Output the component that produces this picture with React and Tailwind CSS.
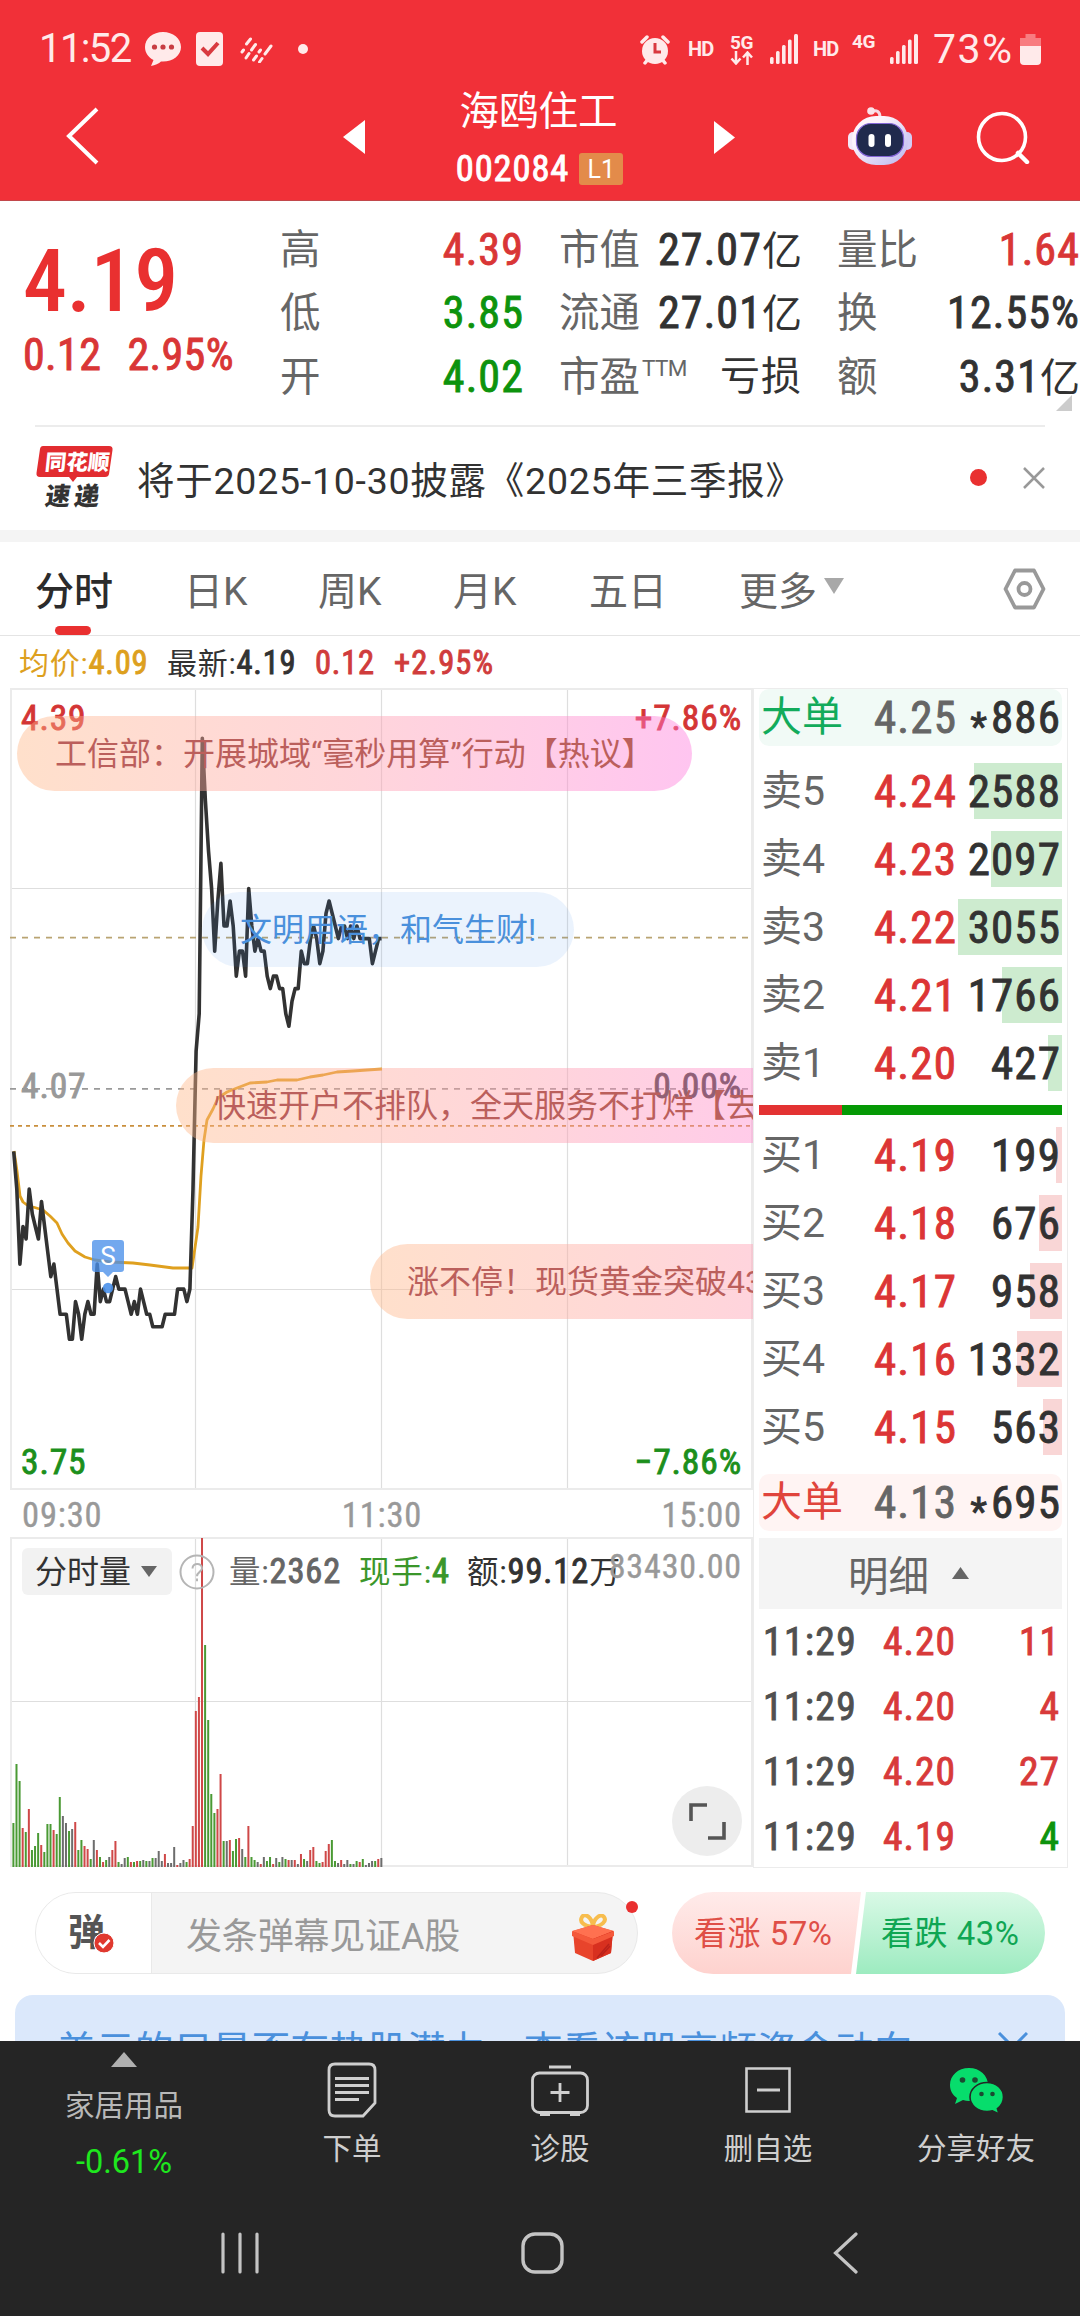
import React from 'react';
import { clsx } from 'clsx';

// Цена по минутам, в центах (09:30 → 11:29)
const PRICES = [
  402, 399, 393, 396, 395, 399, 397, 396, 395, 398, 396, 394, 392, 393, 391, 389, 389, 389, 387, 387,
  390, 389, 387, 389, 390, 389, 389, 393, 390, 391, 390, 390, 391, 392, 391, 391, 391, 390, 389, 390,
  389, 391, 390, 389, 389, 388, 388, 388, 388, 389, 389, 389, 389, 391, 391, 391, 390, 391, 399, 410,
  413, 435, 430, 426, 423, 418, 422, 425, 420, 420, 422, 420, 416, 418, 418, 416, 423, 420, 418, 419,
  418, 418, 416, 415, 416, 416, 415, 415, 413, 412, 414, 415, 415, 418, 417, 417, 419, 420, 419, 417,
  418, 421, 422, 421, 420, 419, 420, 420, 419, 420, 419, 420, 419, 419, 419, 419, 417, 418, 419, 419,
];

const AVG_LINE =
  '14,1151 17,1171 20,1196 23,1202 27,1205 33,1207 43,1210 50,1216 57,1223 62,1234 68,1243 75,1251 85,1257 95,1260 110,1262 133,1263 150,1265 173,1268 192,1268 198,1227 201,1176 204,1140 207,1120 213,1109 218,1098 227,1092 237,1088 250,1083 267,1082 277,1080 297,1080 310,1077 323,1075 337,1072 353,1071 367,1070 382,1069';

// Объём: цвет + высота столбика (r рост, g падение, k без изменений)
const VOLUMES =
  'g44 g103 g86 r39 g35 r58 g17 g21 g34 r22 g15 g43 g43 r37 g33 g70 k51 k44 g36 k38 r45 g17 g27 r21 r18 g8 k27 r17 g10 r5 g7 k10 r17 r26 g5 k3 k9 g10 r5 g5 r6 g6 k7 g6 k6 g9 k9 k16 k6 r13 k4 k4 k20 r2 k4 k7 g5 r8 r41 r156 r170 r329 g222 g147 g73 g54 r58 r93 g26 k26 r27 g16 g28 r29 k18 g10 r41 g10 g7 k5 r3 k10 g6 g10 r3 k9 g5 k10 g8 r7 k7 r7 k3 r13 g8 k6 r17 r20 g6 g4 r5 r16 r23 g27 g6 k4 r7 k3 k7 g3 k3 g6 r5 g8 k2 k4 k6 g6 r8 k9'.split(' ');
const VOL_COLORS = { r: '#cf4848', g: '#4a9a34', k: '#6d6d6d' };

const SELLS = [
  ['卖5', '4.24', '2588', 88],
  ['卖4', '4.23', '2097', 71],
  ['卖3', '4.22', '3055', 104],
  ['卖2', '4.21', '1766', 60],
  ['卖1', '4.20', '427', 14],
];
const BUYS = [
  ['买1', '4.19', '199', 6],
  ['买2', '4.18', '676', 23],
  ['买3', '4.17', '958', 32],
  ['买4', '4.16', '1332', 45],
  ['买5', '4.15', '563', 19],
];
const TRADES = [
  ['11:29', '4.20', '11', true],
  ['11:29', '4.20', '4', true],
  ['11:29', '4.20', '27', true],
  ['11:29', '4.19', '4', false],
];

const NUM = "font-['Roboto_Condensed','Noto_Sans_CJK_SC',sans-serif] tracking-[0.025em]";
// Чуть плотнее обычного начертания, но легче medium
const STRONG = '[-webkit-text-stroke:0.9px_currentColor]';
const THIN = 'font-normal [-webkit-text-stroke:0]';

const minuteX = (i) => 13.7 + i * 3.092;
const priceY = (p) => 1088.8 - (p - 407) * 12.52;

function SignalBars() {
  return (
    <svg className="h-[30px] w-[28px]" viewBox="0 0 28 30" fill="#ffeaea">
      <rect x="0" y="23" width="3.6" height="7" rx="1.5" />
      <rect x="6" y="17" width="3.6" height="13" rx="1.5" />
      <rect x="12" y="11" width="3.6" height="19" rx="1.5" />
      <rect x="18" y="5.500" width="3.6" height="24.500" rx="1.5" />
      <rect x="24" y="0" width="4" height="30" rx="1.5" />
    </svg>
  );
}

function StatusBar() {
  return (
    <div className="flex h-[98px] items-center pl-[39px] text-[#ffeaea]">
      <span className="w-[106px] text-[40px] leading-none tracking-[-0.04em]">11:52</span>
      <svg className="h-[36px] w-[36px]" viewBox="0 0 36 36">
        <path d="M18 1C8 1 0 7.500 0 16c0 6 3.500 10.500 8.500 13L6 35c4-.5 8-2.500 10-4.500h2c10 0 18-6 18-14.500S28 1 18 1z" fill="#ffeaea" />
        <circle cx="9.500" cy="16" r="2.600" fill="#c83c42" />
        <circle cx="18" cy="16" r="2.600" fill="#c83c42" />
        <circle cx="26.500" cy="16" r="2.600" fill="#c83c42" />
      </svg>
      <svg className="ml-[15px] h-[34px] w-[27px]" viewBox="0 0 27 34">
        <rect width="27" height="34" rx="4" fill="#ffeaea" />
        <path d="M6 16l6 6 10-11" fill="none" stroke="#d93a40" strokeWidth="4" />
      </svg>
      <svg className="ml-[17px] h-[28px] w-[33px]" viewBox="0 0 33 28" stroke="#ffeaea" strokeWidth="3" strokeLinecap="round" fill="none">
        <path d="M2 17l1.500-2M6.500 9l4-5M6 23l3-4.500M11.500 15l4-5.500M13.500 25l3-4M19 17l1.500-2M19.500 27l2.500-3.500M25 19l6-8" />
      </svg>
      <span className="ml-[25px] h-[10px] w-[10px] rounded-full bg-[#ffeaea]" />

      <svg className="ml-[332px] h-[31px] w-[30px]" viewBox="0 0 30 31">
        <path d="M2 8l5-5M28 8l-5-5M5 29l4-5M25 29l-4-5" stroke="#ffeaea" strokeWidth="3.500" strokeLinecap="round" />
        <circle cx="15" cy="17" r="13" fill="#ffeaea" />
        <path d="M15 9v9h6" fill="none" stroke="#d93a40" strokeWidth="3" />
      </svg>
      <span className="ml-[18px] w-[42px] text-[20px] leading-none font-bold tracking-[-0.04em]">HD</span>
      <div className="flex w-[40px] flex-col">
        <span className="text-[19px] leading-[17px] font-bold tracking-[-0.02em]">5G</span>
        <svg className="h-[14px] w-[24px]" viewBox="0 0 24 14" fill="none" stroke="#ffeaea" strokeWidth="2.500">
          <path d="M6 0v12M1.500 7.500L6 12.500l4.500-5M17.500 14V2M13 6.500l4.500-5 4.500 5" />
        </svg>
      </div>
      <SignalBars />
      <span className="ml-[15px] w-[39px] text-[20px] leading-none font-bold tracking-[-0.04em]">HD</span>
      <span className="mb-[15px] w-[38px] text-[19px] leading-none font-bold tracking-[-0.02em]">4G</span>
      <SignalBars />
      <span className="ml-[15px] w-[87px] text-[41px] leading-none tracking-[0.035em]">73%</span>
      <svg className="h-[31px] w-[21px]" viewBox="0 0 21 31">
        <path d="M5.500 0h10v4H21v9H0V4h5.500z" fill="#f87c80" />
        <path d="M0 12h21v15a4 4 0 0 1-4 4H4a4 4 0 0 1-4-4z" fill="#ffeaea" />
      </svg>
    </div>
  );
}

function Robot() {
  return (
    <svg className="mt-[-3px] h-[60px] w-[64px]" viewBox="0 0 64 60">
      <defs>
        <linearGradient id="shell" x1="0" y1="0" x2="1" y2="1">
          <stop offset="0.3" stopColor="#fdf4fb" />
          <stop offset="1" stopColor="#b9b4ee" />
        </linearGradient>
      </defs>
      <path d="M23 5.500c6-2 9 0 9 6" fill="none" stroke="#f7d9e4" strokeWidth="3" />
      <circle cx="23" cy="5" r="3.800" fill="#fbe3ea" />
      <rect x="0" y="26" width="10" height="18" rx="5" fill="#f4e8f8" />
      <rect x="54" y="26" width="10" height="18" rx="5" fill="#d3cdf4" />
      <rect x="4" y="10" width="56" height="49" rx="24" fill="url(#shell)" />
      <rect x="8.500" y="17.500" width="47" height="33" rx="14.500" fill="#202a4d" stroke="#8567d8" strokeWidth="1.200" />
      <rect x="20.500" y="28" width="6" height="13" rx="3" fill="#fff" />
      <rect x="37" y="28" width="6" height="13" rx="3" fill="#fff" />
    </svg>
  );
}

function Header() {
  return (
    <header className="h-[201px] border-b border-[#c2474b] bg-[#f13038] text-white">
      <StatusBar />
      <div className="flex h-[102px] pl-[66px]">
        <svg className="mt-[9px] h-[58px] w-[34px]" viewBox="0 0 34 58" fill="none" stroke="#fff" strokeWidth="4">
          <path d="M31 2L3 29l28 27" />
        </svg>
        <svg className="mt-[22px] ml-[243px] h-[34px] w-[22px]" viewBox="0 0 22 34" fill="#fff"><path d="M22 0v34L0 17z" /></svg>
        <div className="flex w-[349px] flex-col items-center">
          <span className="mt-[-6px] mr-[2px] text-[39.500px] leading-[40px]">海鸥住工</span>
          <div className="mt-[21px] flex items-center gap-[10px]">
            <span className={clsx(NUM, STRONG, 'text-[36.500px] leading-[32px]')}>002084</span>
            <span className="flex h-[32px] w-[44px] items-center justify-center rounded-[3px] bg-[#e38b4a] text-[25px] leading-none">L1</span>
          </div>
        </div>
        <svg className="mt-[23px] h-[33px] w-[21px]" viewBox="0 0 21 33" fill="#fff"><path d="M0 0v33l21-16.500z" /></svg>
        <div className="mt-[11px] ml-[113px]"><Robot /></div>
        <svg className="mt-[12px] ml-[64px] h-[54px] w-[54px]" viewBox="0 0 54 54" fill="none" stroke="#fff" strokeWidth="3.600">
          <circle cx="26" cy="27" r="23.500" />
          <path d="M42 43l9 9" strokeWidth="4.500" strokeLinecap="round" />
        </svg>
      </div>
    </header>
  );
}

function Stat({ label, sup, value, color = 'text-[#323232]', thin }) {
  return (
    <div className="flex h-[63.500px] items-center justify-between leading-none whitespace-nowrap">
      <span className="flex text-[40.500px] text-[#666]">
        {label}
        {sup && <sup className="top-0 ml-[2px] text-[22.500px] leading-[22px] tracking-[-0.03em]">{sup}</sup>}
      </span>
      <span className={clsx(NUM, color, thin ? 'text-[40px]' : clsx(STRONG, 'text-[44px]'))}>
        {value.replace('亿', '')}
        {value.includes('亿') && <span className={clsx(THIN, 'text-[40px] tracking-normal')}>亿</span>}
      </span>
    </div>
  );
}

function Quote() {
  return (
    <section className="relative flex h-[224px] pt-[17px]">
      <div className={clsx(NUM, 'w-[280px] shrink-0 pl-[23px]')}>
        <div className="pt-[19px] text-[88px] leading-[88px] font-medium tracking-[-0.005em] text-[#e93030]">4.19</div>
        <div className={clsx(STRONG, 'mt-[1px] flex gap-[26px] text-[44px] leading-[58px] text-[#d93636]')}>
          <span>0.12</span>
          <span>2.95%</span>
        </div>
      </div>
      <div className="w-[244px] shrink-0">
        <Stat label="高" value="4.39" color="text-[#d93636]" />
        <Stat label="低" value="3.85" color="text-[#0d930d]" />
        <Stat label="开" value="4.02" color="text-[#0d930d]" />
      </div>
      <div className="ml-[35px] w-[243px] shrink-0">
        <Stat label="市值" value="27.07亿" />
        <Stat label="流通" value="27.01亿" />
        <Stat label="市盈" sup="TTM" value="亏损" thin />
      </div>
      <div className="ml-[35px] w-[243px] shrink-0">
        <Stat label="量比" value="1.64" color="text-[#d93636]" />
        <Stat label="换" value="12.55%" />
        <Stat label="额" value="3.31亿" />
      </div>
      <svg className="absolute right-[8px] bottom-[14px] h-[16px] w-[16px]" viewBox="0 0 16 16"><path d="M16 0v16H0z" fill="#ccc" /></svg>
    </section>
  );
}

function News() {
  return (
    <section className="mx-[35px] flex h-[105px] items-center border-t-2 border-[#ececec]">
      <svg className="mt-[-2px] h-[70px] w-[80px] overflow-visible" viewBox="0 0 80 70" fontFamily="Noto Sans CJK SC" fontWeight="900">
        <path d="M8 3h66q4 0 3.500 4l-3.500 24q-.5 3-4 3H42l-4 5-4-5H5q-4 0-3.500-4L5 6q.5-3 3-3z" fill="#e22c30" />
        <text x="12" y="27" fontSize="21.500" fill="#fff" transform="skewX(-6)">同花顺</text>
        <text x="18" y="62" fontSize="25" letterSpacing="4" fill="#333" transform="skewX(-8)">速递</text>
      </svg>
      <span className="ml-[22px] pt-[6px] text-[37.500px] leading-none tracking-[0.02em] text-[#323232]">将于2025-10-30披露《2025年三季报》</span>
      <span className="mr-[36px] mb-[2px] ml-auto h-[17px] w-[17px] rounded-full bg-[#e93030]" />
      <svg className="mb-[2px] h-[22px] w-[22px]" viewBox="0 0 22 22" stroke="#999" strokeWidth="2.500"><path d="M1 1l20 20M21 1L1 21" /></svg>
    </section>
  );
}

function Tabs() {
  return (
    <nav className="flex h-[94px] items-center border-b border-[#e4e4e4] pl-[35px] text-[39px] leading-none text-[#666]">
      <div className="relative w-[149px] pt-[8px] font-medium text-[#2b2b2b]">
        分时
        <span className="absolute -bottom-[23px] left-[20px] h-[9px] w-[36px] rounded-full bg-[#e93030]" />
      </div>
      <span className="w-[134px] pt-[8px]">日K</span>
      <span className="w-[135px] pt-[8px]">周K</span>
      <span className="w-[136px] pt-[8px]">月K</span>
      <span className="w-[150px] pt-[8px]">五日</span>
      <span className="pt-[8px]">更多</span>
      <svg className="mb-[6px] ml-[7px] h-[16px] w-[20px]" viewBox="0 0 20 16"><path d="M0 0h20L10 16z" fill="#a8a8a8" /></svg>
      <svg className="ml-[159px] h-[42px] w-[43px]" viewBox="0 0 43 42" fill="none" stroke="#999" strokeWidth="3.800">
        <path d="M12 2.500h19L40.500 21 31 39.500H12L2.500 21z" strokeLinejoin="round" />
        <circle cx="21.500" cy="21" r="6" />
      </svg>
    </nav>
  );
}

function InfoLine() {
  return (
    <div className={clsx(NUM, STRONG, 'flex h-[52px] items-center pt-[3px] pl-[19px] text-[32.500px] leading-none')}>
      <span className="w-[148px] text-[#dda01e]"><span className={clsx(THIN, 'text-[30px]')}>均价:</span>4.09</span>
      <span className="w-[148px] text-[#323232]"><span className={clsx(THIN, 'text-[30px]')}>最新:</span>4.19</span>
      <span className="w-[79px] text-[#d03c3c]">0.12</span>
      <span className="tracking-[0.035em] text-[#d03c3c]">+2.95%</span>
    </div>
  );
}

function Bullet({ className, children }) {
  return (
    <div className={clsx('absolute flex h-[75px] items-center rounded-full text-[32px] leading-none whitespace-nowrap', className)}>
      {children}
    </div>
  );
}

const WARM = 'bg-linear-to-r from-[#ffb786]/43 via-[#ff9eaa]/43 to-[#ff78dc]/43 text-[#bb5f5c]';

function PriceChart() {
  const line = PRICES.map((p, i) => `${minuteX(i).toFixed(1)},${priceY(p).toFixed(1)}`).join(' ');
  const label = clsx(NUM, STRONG, 'absolute text-[35.500px] leading-none');

  return (
    <div className="relative h-[802px] overflow-hidden">
      <svg className="block h-[802px] w-[743px]" viewBox="10 688 743 802" fill="none">
        <path d="M195.500 688v802M381.500 688v802M567.500 688v802M10 888.500h743M10 1289.500h743" stroke="#dedede" strokeWidth="1.200" />
        <rect x="11" y="689" width="741" height="800" stroke="#ebebeb" strokeWidth="2" />
        <path d="M10 937.600h740" stroke="#b9a472" strokeWidth="1.800" strokeDasharray="6 6" />
        <path d="M10 1088.800h740" stroke="#999" strokeWidth="1.800" strokeDasharray="6 6" />
        <path d="M10 1125.800h740" stroke="#c98f3c" strokeWidth="1.800" strokeDasharray="4 4" />
        <polyline points={AVG_LINE} stroke="#dfa01f" strokeWidth="2.800" strokeLinejoin="round" />
        <polyline points={line} stroke="#323232" strokeWidth="3.600" strokeLinejoin="round" />
        <path d="M95 1240h26q3 0 3 3v26q0 3-3 3h-8l-5 5-5-5h-8q-3 0-3-3v-26q0-3 3-3z" fill="#4a90e9" fillOpacity="0.78" />
        <text x="108" y="1265" fontSize="26" fill="#fff" textAnchor="middle" fontFamily="Roboto">S</text>
        <circle cx="108" cy="1288" r="5.200" fill="#4a90e9" fillOpacity="0.9" />
      </svg>
      <span className={clsx(label, 'top-[13px] left-[11px] text-[#d43535]')}>4.39</span>
      <span className={clsx(label, 'top-[13px] right-[11px] text-[#d43535]')}>+7.86%</span>
      <span className={clsx(label, 'top-[381px] left-[11px] text-[#999]')}>4.07</span>
      <span className={clsx(label, 'top-[381px] right-[11px] text-[#3c3c3c]')}>0.00%</span>
      <span className={clsx(label, 'top-[757px] left-[11px] text-[#1c8f1c]')}>3.75</span>
      <span className={clsx(label, 'top-[757px] right-[11px] text-[#1c8f1c]')}>−7.86%</span>

      <Bullet className={clsx(WARM, 'top-[28px] left-[7px] w-[675px] pl-[38px]')}>工信部：开展城域“毫秒用算”行动【热议】</Bullet>
      <Bullet className="top-[204px] left-[192px] w-[372px] bg-[#3785eb]/10 pl-[38px] text-[#4a90dc]">文明用语，和气生财!</Bullet>
      <Bullet className={clsx(WARM, 'top-[380px] left-[166px] w-[700px] pl-[38px]')}>快速开户不排队，全天服务不打烊【去</Bullet>
      <Bullet className={clsx(WARM, 'top-[556px] left-[360px] w-[690px] pl-[37px]')}>涨不停！现货黄金突破43</Bullet>
    </div>
  );
}

function VolumeChart() {
  return (
    <div className="relative h-[330px]">
      <svg className="block h-[330px] w-[743px]" viewBox="10 1537 743 330" fill="none">
        <path d="M195.500 1537v330M381.500 1537v330M567.500 1537v330M10 1701.500h743" stroke="#dedede" strokeWidth="1.200" />
        <rect x="11" y="1538" width="741" height="328" stroke="#ebebeb" strokeWidth="2" />
        {VOLUMES.map((v, i) => {
          const h = Number(v.slice(1));
          return <rect key={i} x={12.4 + i * 3.092} y={1867 - h} width="2" height={h} fill={VOL_COLORS[v[0]]} />;
        })}
      </svg>
      <div className={clsx(NUM, 'absolute top-[11px] left-[12px] flex h-[47px] items-center text-[34.500px] leading-none whitespace-nowrap')}>
        <div className="flex h-[47px] w-[150px] items-center rounded-[6px] bg-[#f2f2f2] pl-[13px] text-[32px] tracking-normal text-[#323232]">
          分时量
          <svg className="ml-[10px] h-[11px] w-[16px]" viewBox="0 0 16 11"><path d="M0 0h16L8 11z" fill="#666" /></svg>
        </div>
        <svg className="ml-[7px] h-[36px] w-[36px]" viewBox="0 0 36 36" fill="none" stroke="#b5b5b5" strokeWidth="2">
          <circle cx="18" cy="18" r="16.500" />
          <path d="M13.500 14.500c0-6 9.500-6 9.500-.3 0 3.600-5 3.800-5 8M18 24.500v2.800" />
        </svg>
        <span className={clsx(STRONG, 'ml-[14px] w-[130px] text-[#666]')}><span className={clsx(THIN, 'text-[31.500px]')}>量:</span>2362</span>
        <span className={clsx(STRONG, 'w-[108px] text-[#3a962a]')}><span className={clsx(THIN, 'text-[31.500px]')}>现手:</span>4</span>
        <span className={clsx(STRONG, 'text-[#323232]')}><span className={clsx(THIN, 'text-[31.500px]')}>额:</span>99.12<span className={clsx(THIN, 'text-[31px]')}>万</span></span>
      </div>
      <span className={clsx(NUM, 'absolute top-[12px] right-[11px] text-[34px] leading-none text-[#999] [-webkit-text-stroke:0.4px_currentColor]')}>83430.00</span>
      <div className="absolute top-[249px] right-[11px] flex h-[70px] w-[70px] items-center justify-center rounded-full bg-[#ededed]">
        <svg className="h-[37px] w-[37px]" viewBox="0 0 37 37" fill="none" stroke="#555" strokeWidth="3.600">
          <path d="M2 18V2h16M35 19v16H19" />
        </svg>
      </div>
    </div>
  );
}

function BigOrder({ price, volume, className, labelColor }) {
  return (
    <div className={clsx(NUM, STRONG, 'grid h-[57px] grid-cols-[113px_88px_1fr] items-center pr-px pl-[2px] text-[45px] leading-none', className)}>
      <span className={clsx(THIN, 'text-[41px] tracking-normal', labelColor)}>大单</span>
      <span className="text-[#666]">{price}</span>
      <span className="text-right text-[#323232]"><span className="relative top-[7px] mr-[3px] text-[38px]">*</span>{volume}</span>
    </div>
  );
}

function Level({ row, fill }) {
  const [label, price, volume, width] = row;
  return (
    <div className={clsx(NUM, STRONG, 'relative grid h-[68px] grid-cols-[113px_88px_1fr] items-center pr-px pl-[2px] text-[45px] leading-none')}>
      <span className={clsx('absolute top-[6px] right-0 h-[56px]', fill)} style={{ width }} />
      <span className={clsx(THIN, "font-['Roboto','Noto_Sans_CJK_SC',sans-serif] text-[41px] tracking-normal text-[#666]")}>{label}</span>
      <span className="text-[#dc3535]">{price}</span>
      <span className="relative text-right text-[#323232]">{volume}</span>
    </div>
  );
}

function OrderBook() {
  return (
    <aside className="h-[1180px] w-[315px] overflow-hidden border border-[#ececec] px-[5px]">
      <BigOrder price="4.25" volume="886" className="rounded-[10px] bg-[#f1faf6]" labelColor="text-[#12ab5b]" />
      <div className="mt-[11px]">{SELLS.map((r) => <Level key={r[0]} row={r} fill="bg-[#cdebcf]" />)}</div>
      <div className="mt-[8px] flex h-[10px]">
        <div className="w-[83px] bg-[#e33232]" />
        <div className="flex-1 bg-[#059905]" />
      </div>
      <div className="mt-[6px]">{BUYS.map((r) => <Level key={r[0]} row={r} fill="bg-[#f9d6d6]" />)}</div>
      <BigOrder price="4.13" volume="695" className="mt-[13px] rounded-[10px] bg-[#fff4f3]" labelColor="text-[#e0443c]" />
      <div className="mt-[7px] flex h-[71px] items-center justify-center gap-[23px] bg-[#f4f4f4] pt-[8px] pr-[4px] text-[40.500px] leading-none text-[#666]">
        明细
        <svg className="mb-[10px] h-[12px] w-[17px]" viewBox="0 0 17 12"><path d="M8.500 0L17 12H0z" fill="#666" /></svg>
      </div>
      {TRADES.map(([time, price, volume, up], i) => (
        <div key={i} className={clsx(NUM, STRONG, 'grid h-[65px] grid-cols-[120px_80px_1fr] items-center pr-[2px] pl-[4px] text-[39.500px] leading-none text-[#d83a3a]')}>
          <span className="tracking-[0.035em] text-[#505050]">{time}</span>
          <span>{price}</span>
          <span className={clsx('text-right', !up && 'text-[#0d930d]')}>{volume}</span>
        </div>
      ))}
    </aside>
  );
}

function Gift() {
  return (
    <svg className="h-[48px] w-[46px]" viewBox="0 0 46 48">
      <path d="M23 13C14 12 9 8 12 3s10 1 11 9c1-8 8-13 11-9s-2 9-11 10z" fill="none" stroke="#f7bd4e" strokeWidth="4" />
      <path d="M3 17l20-6 20 6-2 22-18 8L5 39z" fill="#e8442b" />
      <path d="M2 17l21-6 21 6-21 8z" fill="#ff7150" />
      <path d="M23 25v22l18-8 2-22z" fill="#d8301f" />
      <path d="M2 17l21 8v6L2 22zM44 17l-21 8v6l21-9z" fill="#f4593b" />
      <path d="M27 44l12-14M31 42l9-10" stroke="#b9221a" strokeWidth="1.500" />
    </svg>
  );
}

function BulletBar() {
  return (
    <section className="mt-[24px] flex h-[82px] pl-[35px]">
      <div className="relative flex h-[82px] w-[603px] items-center rounded-full border border-[#e9e9e9] bg-[#f4f4f4]">
        <div className="relative flex h-full w-[116px] items-center rounded-l-full border-r border-[#e9e9e9] bg-white pl-[32px]">
          <span className="mb-[6px] font-['Noto_Sans_CJK_SC',sans-serif] text-[37px] leading-none font-bold text-[#555]">弹</span>
          <svg className="absolute top-[39px] left-[57px] h-[22px] w-[22px]" viewBox="0 0 22 22">
            <circle cx="11" cy="11" r="10" fill="#e0392f" stroke="#fff" />
            <path d="M6 11l4 4 6.500-7" fill="none" stroke="#fff" strokeWidth="2.600" />
          </svg>
        </div>
        <span className="ml-[34px] pt-[8px] text-[36px] leading-none tracking-[-0.005em] text-[#999]">发条弹幕见证A股</span>
        <span className="mt-[10px] mr-[21px] ml-auto"><Gift /></span>
        <span className="absolute top-[8px] right-[-1px] h-[12px] w-[12px] rounded-full bg-[#e93030]" />
      </div>
      <div className="relative ml-[34px] h-[82px] w-[373px] text-[33px] leading-[82px]">
        <svg className="absolute inset-0 h-[82px] w-[373px]" viewBox="0 0 373 82">
          <defs>
            <linearGradient id="up" x1="0" y1="0" x2="0" y2="1"><stop stopColor="#ffebea" /><stop offset="1" stopColor="#fed2ce" /></linearGradient>
            <linearGradient id="down" x1="0" y1="0" x2="0" y2="1"><stop stopColor="#d9f9e6" /><stop offset="1" stopColor="#9debc0" /></linearGradient>
          </defs>
          <path d="M41 0h148l-10 82H41a41 41 0 0 1 0-82z" fill="url(#up)" />
          <path d="M194 0h138a41 41 0 0 1 0 82H184z" fill="url(#down)" />
        </svg>
        <div className="relative flex pt-px">
          <span className="w-[186px] pl-[22px] tracking-[0.015em] text-[#df4f47]">看涨 57%</span>
          <span className="pl-[23px] tracking-[0.015em] text-[#0fa653]">看跌 43%</span>
        </div>
      </div>
    </section>
  );
}

function Banner() {
  return (
    <section className="mx-[15px] mt-[21px] h-[46px] overflow-hidden rounded-t-[18px] bg-[#dbe8fb]">
      <div className="flex pt-[35px] pl-[42px] text-[38.900px] leading-[42px] whitespace-nowrap text-[#4a90dc]">
        美元的只是否有热股潜力，查看该股高频资金动向
        <svg className="mt-[2px] ml-[85px] h-[30px] w-[30px]" viewBox="0 0 30 30" stroke="#4a90dc" strokeWidth="3"><path d="M1 1l28 28M29 1L1 29" /></svg>
      </div>
    </section>
  );
}

function Tool({ label, children }) {
  return (
    <div className="flex w-[208px] flex-col items-center pt-[20px]">
      <div className="flex h-[58px] items-center">{children}</div>
      <span className="mt-[15px] text-[29.500px] leading-[30px] text-[#cfcfcf]">{label}</span>
    </div>
  );
}

function BottomBar() {
  return (
    <footer className="h-[275px] bg-[#252525]">
      <div className="flex h-[170px]">
        <div className="flex w-[248px] flex-col items-center">
          <svg className="mt-[11px] h-[15px] w-[26px]" viewBox="0 0 26 15"><path d="M13 0l13 15H0z" fill="#b0b0b0" /></svg>
          <span className="mt-[24px] text-[29.500px] leading-[30px] text-[#b8b8b8]">家居用品</span>
          <span className="mt-[25px] text-[32.500px] leading-[32px] text-[#1ee81e]">-0.61%</span>
        </div>
        <Tool label="下单">
          <svg className="h-[56px] w-[50px]" viewBox="0 0 50 56" fill="none" stroke="#cfcfcf" strokeWidth="2.800">
            <path d="M8 2h34q6 0 6 6v33L36 54H8q-6 0-6-6V8q0-6 6-6z" />
            <path d="M8 16.500h34M8 23.500h34M8 30.500h34M8 37.500h24" strokeWidth="3" />
          </svg>
        </Tool>
        <Tool label="诊股">
          <svg className="mt-[2px] h-[52px] w-[58px]" viewBox="0 0 58 52" fill="none" stroke="#cfcfcf" strokeWidth="2.800">
            <path d="M18 2h22" strokeWidth="3" />
            <rect x="1.500" y="8" width="55" height="39.500" rx="7" />
            <path d="M29 18v19M19.500 27.500h19M9 49.500h10M39 49.500h10" />
          </svg>
        </Tool>
        <Tool label="删自选">
          <svg className="h-[46px] w-[46px]" viewBox="0 0 46 46" fill="none" stroke="#cfcfcf" strokeWidth="2.600">
            <path d="M1.500 1.500h43v43h-43z" />
            <path d="M12 23h23" strokeWidth="3" />
          </svg>
        </Tool>
        <Tool label="分享好友">
          <svg className="h-[47px] w-[55px]" viewBox="0 0 55 47">
            <path d="M20 1C9 1 1 8.500 1 18c0 5.500 2.500 10 7 13l-2 6 8-4c2 .6 4 .9 6 .9 11 0 19-7 19-16S31 1 20 1z" fill="#07dd6c" />
            <path d="M38 15.500c-9.500 0-17 6.500-17 14.500s7.500 14.500 17 14.500c2 0 3.700-.2 5.400-.7l6.600 3.200-1.600-5.400C52 39 54.500 35 54.500 30c0-8-7-14.500-16.500-14.500z" fill="#07dd6c" stroke="#252525" strokeWidth="1.600" />
            <g fill="#1b4a30">
              <circle cx="13.500" cy="13" r="2.800" /><circle cx="26" cy="13" r="2.800" />
              <circle cx="32.500" cy="27" r="2.300" /><circle cx="43.500" cy="27" r="2.300" />
            </g>
          </svg>
        </Tool>
      </div>
      <div className="flex pt-[21px] pl-[220px]">
        <svg className="h-[42px] w-[40px]" viewBox="0 0 40 42" stroke="#c4c4c4" strokeWidth="3.200" strokeLinecap="round">
          <path d="M3 2v38M20 2v38M37 2v38" />
        </svg>
        <svg className="ml-[261px] h-[42px] w-[43px]" viewBox="0 0 43 42" fill="none" stroke="#c4c4c4" strokeWidth="3.400">
          <rect x="2" y="2" width="39" height="38" rx="12" />
        </svg>
        <svg className="ml-[269px] h-[42px] w-[25px]" viewBox="0 0 25 42" fill="none" stroke="#c4c4c4" strokeWidth="3.200" strokeLinecap="round">
          <path d="M23 2L2.500 21 23 40" />
        </svg>
      </div>
    </footer>
  );
}

export default function App() {
  return (
    <div className="h-[2316px] w-[1080px] overflow-hidden bg-white font-['Roboto','Noto_Sans_CJK_SC',sans-serif]">
      <Header />
      <Quote />
      <News />
      <div className="h-[12px] bg-[#f4f4f4]" />
      <Tabs />
      <InfoLine />
      <main className="flex pl-[10px]">
        <div className="w-[743px]">
          <PriceChart />
          <div className={clsx(NUM, 'flex h-[47px] items-center justify-between pt-[3px] pr-[11px] pl-[12px] text-[34.500px] leading-none text-[#999] [-webkit-text-stroke:0.4px_currentColor]')}>
            <span>09:30</span>
            <span>11:30</span>
            <span>15:00</span>
          </div>
          <VolumeChart />
        </div>
        <OrderBook />
      </main>
      <BulletBar />
      <Banner />
      <BottomBar />
    </div>
  );
}
